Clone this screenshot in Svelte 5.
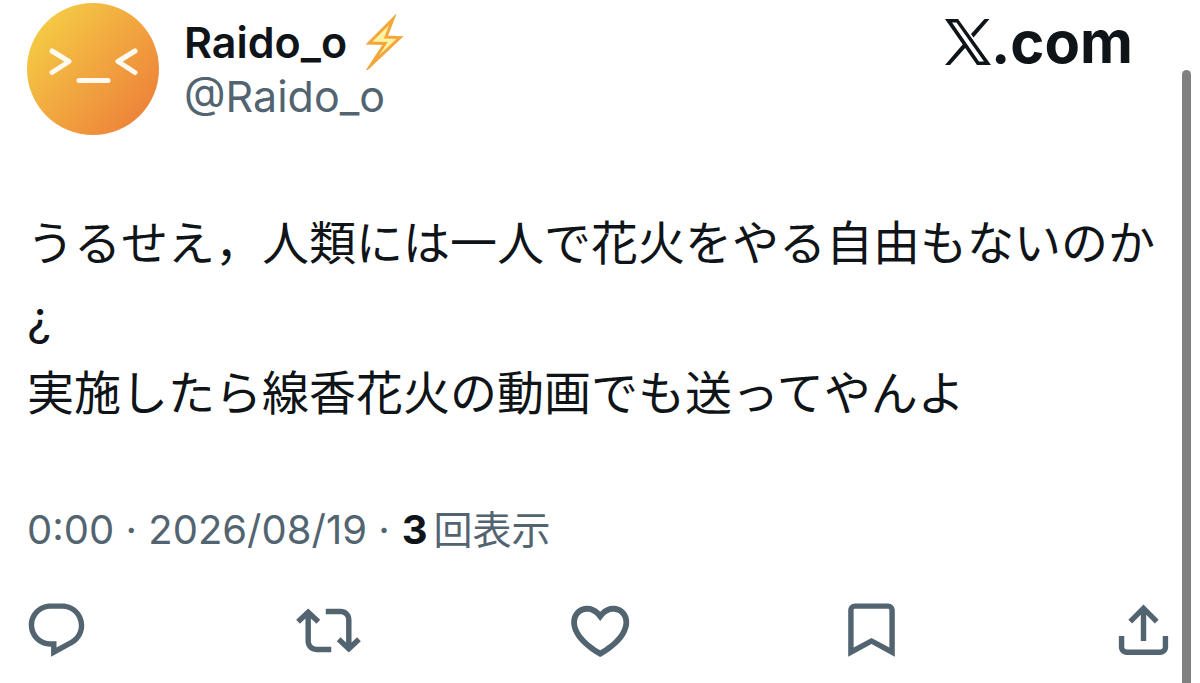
<script lang="ts">
  interface Action {
    label: string;
    path: string;
    viewBox?: string;
  }

  const user = { name: "Raido_o", handle: "@Raido_o" };

  const lines = [
    "うるせえ，人類には一人で花火をやる自由もないのか",
    "¿",
    "実施したら線香花火の動画でも送ってやんよ",
  ];

  const actions: Action[] = [
    {
      label: "返信",
      path: "M1.751 10c0-4.42 3.584-8 8.005-8h4.366c4.49 0 8.129 3.64 8.129 8.13 0 2.96-1.607 5.68-4.196 7.11l-8.054 4.46v-3.69h-.067c-4.49.1-8.183-3.51-8.183-8.01zm8.005-6c-3.317 0-6.005 2.69-6.005 6 0 3.37 2.77 6.08 6.138 6.01l.351-.01h1.761v2.3l5.087-2.81c1.951-1.08 3.163-3.13 3.163-5.36 0-3.39-2.744-6.13-6.129-6.13H9.756z",
    },
    {
      label: "リポスト",
      path: "M4.5 3.88l4.432 4.14-1.364 1.46L5.5 7.55V16c0 1.1.896 2 2 2H13v2H7.5c-2.209 0-4-1.79-4-4V7.55L1.432 9.48.068 8.02 4.5 3.88zM16.5 6H11V4h5.5c2.209 0 4 1.79 4 4v8.45l2.068-1.93 1.364 1.46-4.432 4.14-4.432-4.14 1.364-1.46 2.068 1.93V8c0-1.1-.896-2-2-2z",
    },
    {
      label: "いいね",
      viewBox: "0.9 0.8 22.400 22.400",
      path: "M16.697 5.5c-1.222-.06-2.679.51-3.89 2.16l-.805 1.09-.806-1.09C9.984 6.01 8.526 5.44 7.304 5.5c-1.243.07-2.349.78-2.91 1.91-.552 1.12-.633 2.78.479 4.82 1.074 1.97 3.257 4.27 7.129 6.61 3.87-2.34 6.052-4.64 7.126-6.61 1.111-2.04 1.03-3.7.477-4.82-.561-1.13-1.666-1.84-2.908-1.91zm4.187 7.69c-1.351 2.48-4.001 5.12-8.379 7.67l-.503.3-.504-.3c-4.379-2.55-7.029-5.19-8.382-7.67-1.36-2.5-1.41-4.86-.514-6.67.887-1.79 2.647-2.91 4.601-3.01 1.651-.09 3.368.56 4.798 2.01 1.429-1.45 3.146-2.1 4.796-2.01 1.954.1 3.714 1.22 4.601 3.01.896 1.81.846 4.17-.514 6.67z",
    },
    {
      label: "ブックマーク",
      path: "M3.4 4.5C3.4 3.12 4.52 2 5.9 2h12.2c1.38 0 2.5 1.12 2.5 2.5v17.2L12 17.03l-8.6 4.67V4.5zM5.9 4c-.28 0-.5.22-.5.5v13.8l6.6-3.55 6.6 3.55V4.5c0-.28-.22-.5-.5-.5H5.9z",
    },
    {
      label: "共有",
      path: "M12 2.4l5.6 5.6-1.41 1.42L13 6.22V15.9h-2V6.22l-3.2 3.2L6.4 8 12 2.4zM21.1 14v4.1c0 1.66-1.24 2.9-2.9 2.9H5.8c-1.66 0-2.9-1.24-2.9-2.9V14h2v4.1c0 .53.37.9.9.9h12.4c.53 0 .9-.37.9-.9V14h2z",
    },
  ];
</script>

<article class="post">
  <header class="head">
    <svg class="avatar" viewBox="0 0 132 132" aria-hidden="true">
      <defs>
        <linearGradient id="face" x1="0.05" y1="0.15" x2="0.85" y2="0.85">
          <stop offset="0" stop-color="#f5cd45" />
          <stop offset="1" stop-color="#ee853a" />
        </linearGradient>
      </defs>
      <circle cx="66" cy="66" r="66" fill="url(#face)" />
      <path class="face-line" d="M25 48L42 58.500L25 69.500M108 48L91 58.500L108 69.500M52 77.500H81" />
    </svg>
    <div class="names">
      <div class="name">
        <span>{user.name}</span>
        <svg class="bolt" viewBox="0 0 40 56" aria-hidden="true">
          <path d="M28 5L4 29l16 .500L6 51l29-27.500-14-.500z" />
        </svg>
      </div>
      <div class="handle">{user.handle}</div>
    </div>
    <a class="brand" href="https://x.com" aria-label="X.com">
      <svg class="brand-mark" viewBox="0 0 46 46" aria-hidden="true">
        <path fill-rule="evenodd" d="M0 0H13L46 46H32zM7 3.500L34 42.500H39L11.500 3.500z" />
        <path d="M39.500 0H44.500L28.500 18.500L26 15zM0 46H5L21 28L18.500 24.500z" />
      </svg>
      <span>.com</span>
    </a>
  </header>

  <div class="body">
    {#each lines as line}
      <p>{line}</p>
    {/each}
  </div>

  <div class="meta">
    <span>0:00 · 2026/08/19 ·</span>
    <span><strong>3</strong><span class="views">回表示</span></span>
  </div>

  <div class="actions">
    {#each actions as action}
      <button type="button" aria-label={action.label}>
        <svg viewBox={action.viewBox ?? "0 0 24 24"} aria-hidden="true"><path d={action.path} /></svg>
      </button>
    {/each}
  </div>
</article>
<div class="scroll-thumb"></div>

<style>
  :global(body) {
    margin: 0;
    background: #fff;
    overflow: hidden;
  }
  .post {
    padding: 3px 24px 0 27px;
    color: #0f1419;
    font-family: Inter, "Noto Sans CJK JP", sans-serif;
  }
  .head {
    display: flex;
    align-items: flex-start;
  }
  .avatar {
    width: 132px;
    height: 132px;
    flex: none;
  }
  .face-line {
    fill: none;
    stroke: #fffaf0;
    stroke-width: 5;
    stroke-linecap: round;
    stroke-linejoin: round;
  }
  .names {
    flex: 1;
    padding: 12px 0 0 25px;
    font-size: 43px;
    line-height: 54px;
  }
  .name {
    display: flex;
    align-items: center;
    gap: 18px;
    height: 54px;
    font-weight: 600;
  }
  .bolt {
    width: 40px;
    height: 56px;
  }
  .bolt path {
    fill: #fdf3a0;
    stroke: #f3a63c;
    stroke-width: 3;
    stroke-miterlimit: 10;
  }
  .handle {
    color: #536471;
  }
  .brand {
    display: flex;
    align-items: center;
    margin: 11px 43px 0 0;
    color: #0f1419;
    font-size: 58px;
    font-weight: 700;
    line-height: 56px;
    text-decoration: none;
  }
  .brand-mark {
    width: 46px;
    height: 46px;
    fill: currentColor;
  }
  .body {
    margin-top: 70px;
    font-size: 47px;
    line-height: 75px;
  }
  .body p {
    margin: 0;
    white-space: nowrap;
  }
  .meta {
    display: flex;
    gap: 12px;
    margin-top: 70px;
    color: #536471;
    font-size: 40px;
    line-height: 60px;
  }
  .meta strong {
    color: #0f1419;
    font-weight: 700;
  }
  .views {
    margin-left: 6px;
    font-size: 39px;
  }
  .actions {
    display: flex;
    justify-content: space-between;
    margin: 38px 0 0 -3px;
  }
  .actions button {
    display: flex;
    padding: 0;
    border: none;
    background: none;
    color: #536471;
    cursor: pointer;
  }
  .actions svg {
    width: 65px;
    height: 65px;
    fill: currentColor;
  }
  .scroll-thumb {
    position: fixed;
    top: 70px;
    right: 9px;
    bottom: 0;
    width: 9px;
    border-radius: 5px 5px 0 0;
    background: #808080;
  }
</style>
